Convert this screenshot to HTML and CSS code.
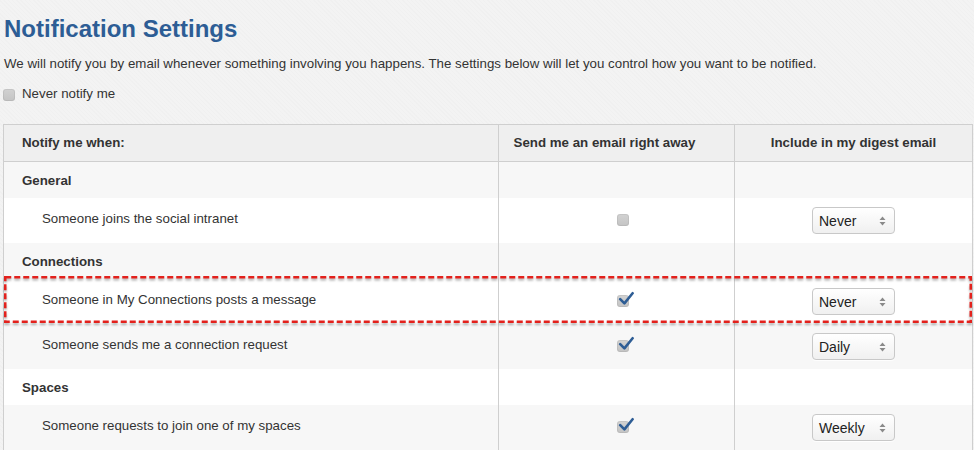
FILE: index.html
```html
<!DOCTYPE html>
<html lang="en">
<head>
    <meta charset="UTF-8">
    <meta name="viewport" content="width=device-width, initial-scale=1.0">
    <title>Notification Settings</title>
    <link rel="stylesheet" href="styles.css">
</head>
<body>
    <h1>Notification Settings</h1>
    <p class="intro">We will notify you by email whenever something involving you happens. The settings below will let you control how you want to be notified.</p>
    <label class="never"><span class="cb"></span>Never notify me</label>

    <div class="table-wrap">
        <table class="settings">
            <colgroup>
                <col class="col-event">
                <col class="col-now">
                <col class="col-digest">
            </colgroup>
            <thead>
                <tr>
                    <th>Notify me when:</th>
                    <th class="now-head">Send me an email right away</th>
                    <th class="digest-head">Include in my digest email</th>
                </tr>
            </thead>
            <tbody>
                <tr class="group"><td>General</td><td></td><td></td></tr>
                <tr class="item">
                    <td class="event">Someone joins the social intranet</td>
                    <td class="now"><span class="cb"></span></td>
                    <td class="digest"><div class="select"><span>Never</span><svg width="7" height="10" viewBox="0 0 7 10"><path d="M3.5 0.5 L6.5 4 L0.5 4 Z M3.5 9.5 L6.5 6 L0.5 6 Z" fill="#8a8a8a"/></svg></div></td>
                </tr>
                <tr class="group"><td>Connections</td><td></td><td></td></tr>
                <tr class="item">
                    <td class="event">Someone in My Connections posts a message</td>
                    <td class="now"><span class="cb checked"><svg width="16" height="16" viewBox="0 0 16 16"><path d="M2.2 9.2 L6.4 13.4 L14.6 3.2" fill="none" stroke="#2e5d95" stroke-width="2.6" stroke-linecap="round" stroke-linejoin="round"/></svg></span></td>
                    <td class="digest"><div class="select"><span>Never</span><svg width="7" height="10" viewBox="0 0 7 10"><path d="M3.5 0.5 L6.5 4 L0.5 4 Z M3.5 9.5 L6.5 6 L0.5 6 Z" fill="#8a8a8a"/></svg></div></td>
                </tr>
                <tr class="item">
                    <td class="event">Someone sends me a connection request</td>
                    <td class="now"><span class="cb checked"><svg width="16" height="16" viewBox="0 0 16 16"><path d="M2.2 9.2 L6.4 13.4 L14.6 3.2" fill="none" stroke="#2e5d95" stroke-width="2.6" stroke-linecap="round" stroke-linejoin="round"/></svg></span></td>
                    <td class="digest"><div class="select"><span>Daily</span><svg width="7" height="10" viewBox="0 0 7 10"><path d="M3.5 0.5 L6.5 4 L0.5 4 Z M3.5 9.5 L6.5 6 L0.5 6 Z" fill="#8a8a8a"/></svg></div></td>
                </tr>
                <tr class="group"><td>Spaces</td><td></td><td></td></tr>
                <tr class="item">
                    <td class="event">Someone requests to join one of my spaces</td>
                    <td class="now"><span class="cb checked"><svg width="16" height="16" viewBox="0 0 16 16"><path d="M2.2 9.2 L6.4 13.4 L14.6 3.2" fill="none" stroke="#2e5d95" stroke-width="2.6" stroke-linecap="round" stroke-linejoin="round"/></svg></span></td>
                    <td class="digest"><div class="select"><span>Weekly</span><svg width="7" height="10" viewBox="0 0 7 10"><path d="M3.5 0.5 L6.5 4 L0.5 4 Z M3.5 9.5 L6.5 6 L0.5 6 Z" fill="#8a8a8a"/></svg></div></td>
                </tr>
            </tbody>
        </table>
        <!-- annotation box around the highlighted row -->
        <svg class="highlight" width="968" height="47" viewBox="0 0 968 47">
            <rect x="1.25" y="1.25" width="965.5" height="44.5" fill="none" stroke="#e3211c" stroke-width="2.5" stroke-dasharray="6 3"/>
        </svg>
    </div>
</body>
</html>
```

FILE: styles.css
```css
body {
    margin: 0;
    padding: 0 1px 0 3px;
    font-family: "Liberation Sans", Arial, sans-serif;
    font-size: 13.3px;
    line-height: 18px;
    color: #333;
    background-color: #f3f3f3;
    background-image: repeating-linear-gradient(45deg, rgba(0, 0, 0, 0.012) 0, rgba(0, 0, 0, 0.012) 1px, transparent 1px, transparent 3px);
}
h1 {
    margin: 14px 0 0 1px;
    font-size: 24px;
    line-height: 30px;
    color: #2d5d95;
}
.intro {
    margin: 11px 0 0 1px;
}
.never {
    display: flex;
    align-items: center;
    gap: 7px;
    margin-top: 12px;
}
.cb {
    display: inline-block;
    position: relative;
    width: 12px;
    height: 12px;
    border-radius: 3px;
    background: linear-gradient(#d2d2d2, #c4c4c4);
    box-shadow: inset 0 0 0 1px rgba(0, 0, 0, 0.06);
}
.never .cb {
    margin-top: 1px;
}
.cb svg {
    position: absolute;
    left: 1px;
    top: -5px;
}
.table-wrap {
    position: relative;
    margin-top: 21px;
}
.settings {
    width: 100%;
    border-collapse: collapse;
    table-layout: fixed;
    border: 1px solid #cfcfcf;
}
.col-event { width: 495px; }
.col-now { width: 236px; }
th, td {
    padding: 8px 18px;
    line-height: 20px;
    text-align: left;
    vertical-align: top;
    border-left: 1px solid #cfcfcf;
}
th {
    background: #efefef;
    font-weight: bold;
    border-bottom: 1px solid #cfcfcf;
}
.now-head {
    text-align: center;
    padding: 8px 32px 8px 8px;
}
.digest-head {
    text-align: center;
    padding: 8px;
}
tbody tr:nth-child(odd) td {
    background: #f7f7f7;
}
tbody tr:nth-child(even) td {
    background: #fff;
}
.group td {
    font-weight: bold;
    padding-top: 9px;
    padding-bottom: 7px;
}
.item td {
    height: 29px;
}
.event {
    padding: 11px 18px 5px 38px;
}
.now {
    text-align: center;
    padding: 8px 6px 8px 18px;
}
.now .cb {
    margin-top: 8px;
}
.digest {
    padding: 9px 8px 7px;
}
.select {
    display: flex;
    align-items: center;
    justify-content: space-between;
    box-sizing: border-box;
    width: 83px;
    height: 27px;
    margin: 0 auto;
    padding: 0 8px 0 6px;
    border: 1px solid #c8c8c8;
    border-radius: 4px;
    background: linear-gradient(#ffffff, #f0f0f0);
    box-shadow: 0 1px 0 rgba(255, 255, 255, 0.8);
    color: #222;
    font-size: 14px;
}
.highlight {
    position: absolute;
    left: 1px;
    top: 152px;
    filter: drop-shadow(0 2px 1px rgba(0, 0, 0, 0.3));
}
```
